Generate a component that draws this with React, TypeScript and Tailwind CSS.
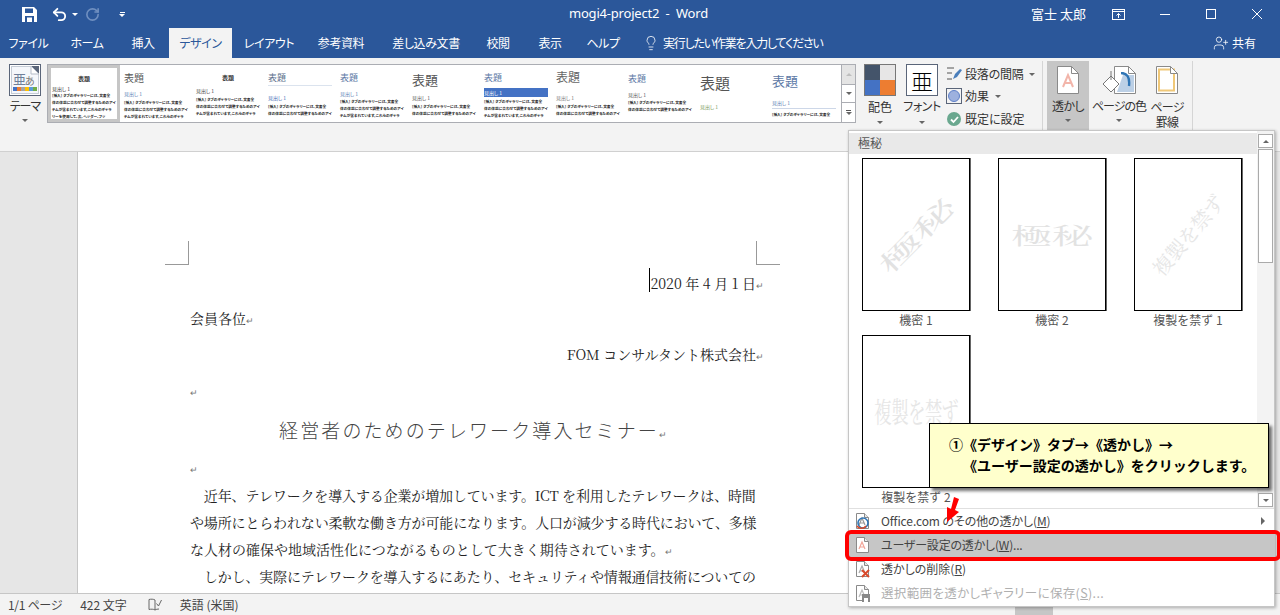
import React from 'react';
import { Lightbulb, UserPlus, Undo2, RotateCw } from 'lucide-react';

const tabs = [
  { label: 'ファイル', w: 'w-[57px]' },
  { label: 'ホーム', w: 'w-[60px]' },
  { label: '挿入', w: 'w-[52px]' },
  { label: 'デザイン', w: 'w-[63px]', active: true },
  { label: 'レイアウト', w: 'w-[74px]' },
  { label: '参考資料', w: 'w-[70px]' },
  { label: '差し込み文書', w: 'w-[100px]' },
  { label: '校閲', w: 'w-[44px]' },
  { label: '表示', w: 'w-[60px]' },
  { label: 'ヘルプ', w: 'w-[46px]' },
];

const bodyLines = [
  '[挿入] タブのギャラリーには、文書全',
  '体の体裁に合わせて調整するためのアイ',
  'テムが含まれています。これらのギャラ',
  'リーを使用して、表、ヘッダー、フッ',
];

type Style = {
  titleCls: string;
  headCls: string;
  bodyCls: string;
  lines: number;
  ruleCls?: string;
  centered?: boolean;
  selected?: boolean;
};

const styles: Style[] = [
  { titleCls: 'text-[6px] text-[#333] font-bold mt-[8px]', headCls: 'text-[#333] mt-[4px]', bodyCls: 'mt-0', lines: 4, centered: true, selected: true },
  { titleCls: 'text-[10px] text-[#555] mt-[8px]', headCls: 'text-[#5b7fb5] mt-[8px]', bodyCls: 'mt-[2px]', lines: 3 },
  { titleCls: 'text-[6px] text-[#333] font-bold mt-[10px]', headCls: 'text-[#444] mt-[7px]', bodyCls: 'mt-[2px]', lines: 3, centered: true },
  { titleCls: 'text-[9px] text-[#5c6f8c] mt-[8px]', ruleCls: 'mt-[3px]', headCls: 'text-[#3f6cb5] mt-[9px]', bodyCls: 'mt-[2px]', lines: 2 },
  { titleCls: 'text-[9px] text-[#5c78a5] mt-[8px]', headCls: 'text-[#5b7fb5] mt-[9px]', bodyCls: 'mt-[1px]', lines: 3 },
  { titleCls: 'text-[13px] text-[#555] mt-[8px]', headCls: 'text-[#555] mt-[9px]', bodyCls: 'mt-[2px]', lines: 2 },
  { titleCls: 'text-[9px] text-[#5c78a5] mt-[8px]', headCls: 'text-white bg-[#4472c4] h-[9px] mt-[6px] leading-[9px]', bodyCls: 'mt-[1px]', lines: 3 },
  { titleCls: 'text-[12px] text-[#666] mt-[6px]', headCls: 'text-[#777] mt-[12px]', bodyCls: 'mt-[2px]', lines: 2 },
  { titleCls: 'text-[9px] text-[#5c78a5] mt-[9px]', headCls: 'text-[#555] mt-[9px]', bodyCls: 'mt-[1px]', lines: 2 },
  { titleCls: 'text-[15px] text-[#555] mt-[10px]', headCls: 'text-[#7a9a5c] mt-[14px]', bodyCls: 'mt-[1px]', lines: 0 },
  { titleCls: 'text-[13px] text-[#5c78a5] mt-[9px]', headCls: 'text-[#5b7fb5] mt-[13px]', ruleCls: 'mt-[2px] order-last', bodyCls: 'mt-[2px]', lines: 1 },
];

function StyleThumb({ s }: { s: Style }) {
  return (
    <div className={`w-[72px] shrink-0 overflow-hidden leading-none ${s.selected ? 'h-[57px] border-[3px] border-[#c6c6c6] px-[1px]' : 'h-[57px] px-[4px]'}`}>
      <div className={`${s.titleCls} ${s.centered ? 'text-center' : ''}`}>表題</div>
      {s.ruleCls && !s.ruleCls.includes('order-last') && <div className={`h-px bg-[#dbe3ee] ${s.ruleCls}`} />}
      <div className={`text-[5px] h-[6px] leading-[6px] ${s.headCls}`}>見出し 1</div>
      {s.ruleCls && s.ruleCls.includes('order-last') && <div className={`h-px bg-[#cdd7e8] ${s.ruleCls}`} />}
      <div className={`text-[3.7px] leading-[7px] text-[#222] font-bold whitespace-nowrap ${s.bodyCls}`}>
        {bodyLines.slice(0, s.lines).map((l) => <div key={l}>{l}</div>)}
      </div>
    </div>
  );
}

function Caret({ className = '' }: { className?: string }) {
  return <div className={`w-0 h-0 border-x-[3px] border-x-transparent border-t-[3px] border-t-[#666] ${className}`} />;
}

function Ret() {
  return <span className="text-[9px] leading-none text-[#777] font-['Noto_Sans_CJK_JP',sans-serif] tracking-normal">↵</span>;
}

function ThemeIcon() {
  return (
    <svg width="32" height="32" viewBox="0 0 32 32">
      <rect x="0.5" y="0.5" width="31" height="31" fill="#fff" stroke="#5a6579" />
      <rect x="2.5" y="2.5" width="27" height="27" fill="#f5f7fb" stroke="#c5ccd6" />
      <path d="M22 2h8v8z" fill="#5a6579" />
      <path d="M22 2v8h8z" fill="#fff" stroke="#b5bcc8" />
      <text x="4" y="20" fontSize="13" fill="#6f7f99">亜</text>
      <text x="16" y="21" fontSize="10" fill="#777">あ</text>
      <rect x="4" y="23" width="4" height="4" fill="#4472c4" />
      <rect x="8" y="23" width="4" height="4" fill="#ed7d31" />
      <rect x="12" y="23" width="4" height="4" fill="#a5a5a5" />
      <rect x="16" y="23" width="4" height="4" fill="#ffc000" />
      <rect x="20" y="23" width="4" height="4" fill="#5b9bd5" />
      <rect x="24" y="23" width="4" height="4" fill="#70ad47" />
    </svg>
  );
}

function SaveIcon() {
  return (
    <svg width="15" height="15" viewBox="0 0 15 15">
      <path d="M0 0h12l3 3v12H0z" fill="#fff" />
      <rect x="3" y="1.5" width="8" height="4.5" fill="#2b579a" />
      <rect x="3" y="9" width="9" height="6" fill="#2b579a" />
      <rect x="5" y="10.5" width="5" height="4.5" fill="#fff" />
    </svg>
  );
}

function WatermarkCard({ text, sub, tone }: { text: string; sub: string; tone: string }) {
  return (
    <div className="w-[136px] flex flex-col items-center shrink-0">
      <div className="w-[108px] h-[153px] border border-black bg-white flex items-center justify-center overflow-hidden shadow-[1px_0_0_#666]">
        <div className={`whitespace-nowrap font-['Noto_Serif_CJK_JP','Liberation_Serif',serif] ${tone}`}>{text}</div>
      </div>
      <div className="text-[12px] text-[#555] leading-[18px] [font-feature-settings:normal]">{sub}</div>
    </div>
  );
}

function MenuRow({ icon, children, cls = '', arrow }: { icon: React.ReactNode; children: React.ReactNode; cls?: string; arrow?: boolean }) {
  return (
    <div className={`h-[24px] flex items-center leading-none ${cls}`}>
      <div className="w-[32px] pl-[4px] flex shrink-0">{icon}</div>
      <div className="flex-1 whitespace-nowrap">{children}</div>
      {arrow && <div className="mr-[9px] w-0 h-0 border-y-[4px] border-y-transparent border-l-[4px] border-l-[#666]" />}
    </div>
  );
}

function MenuDoc({ color = '#f2a69a', children }: { color?: string; children?: React.ReactNode }) {
  return (
    <svg width="18" height="18" viewBox="0 0 18 18">
      <path d="M3.5 1.5h8l4 4v11h-12z" fill="#fff" stroke="#8a8a8a" />
      <path d="M11.5 1.5v4h4" fill="#e8e8e8" stroke="#8a8a8a" />
      <path d="M6 13l3-7 3 7M7 11h4" fill="none" stroke={color} strokeWidth="1.2" />
      {children}
    </svg>
  );
}

function PageDoc({ children }: { children?: React.ReactNode }) {
  return (
    <svg width="22" height="28" viewBox="0 0 22 28">
      <path d="M0.5 0.500h14l7 7v20h-21z" fill="#fff" stroke="#8a8a8a" />
      {children}
      <path d="M14.500 0.500v7h7z" fill="#fff" stroke="#8a8a8a" />
    </svg>
  );
}

export default function App() {
  return (
    <div className="w-[1280px] h-[615px] overflow-hidden relative flex flex-col bg-[#e6e6e6] text-[#333] font-['Noto_Sans_CJK_JP','Noto_Sans',sans-serif] [font-feature-settings:'palt']">
      {/* title bar */}
      <div className="h-[28px] bg-[#2b579a] text-white flex items-center shrink-0">
        <div className="flex items-center pl-[22px] w-[569px] shrink-0">
          <SaveIcon />
          <Undo2 size={17} strokeWidth={2.6} className="ml-[14px]" />
          <div className="ml-[4px] w-0 h-0 border-x-[3px] border-x-transparent border-t-[3px] border-t-white" />
          <RotateCw size={15} strokeWidth={2.6} className="text-[#6f8fc0] ml-[7px]" />
          <div className="flex flex-col items-center gap-[1px] ml-[19px]">
            <div className="w-[5px] h-px bg-white" />
            <div className="w-0 h-0 border-x-[3px] border-x-transparent border-t-[3px] border-t-white" />
          </div>
        </div>
        <div className="flex-1 text-[13px] tracking-[-0.2px] font-['Noto_Sans',sans-serif] whitespace-pre">{'mogi4-project2  -  Word'}</div>
        <div className="text-[13px] mr-[26px] [font-feature-settings:normal]">富士 太郎</div>
        <svg width="13" height="11" viewBox="0 0 13 11" className="mr-[35px]" fill="none" stroke="#fff">
          <rect x="0.5" y="0.5" width="12" height="10" />
          <path d="M0.5 2.5h12M6.5 9V4.5M4.5 6.5l2-2 2 2" />
        </svg>
        <div className="w-[10px] h-px bg-white mr-[36px]" />
        <div className="w-[10px] h-[10px] border border-white mr-[36px]" />
        <svg width="10" height="10" viewBox="0 0 10 10" className="mr-[18px]" stroke="#fff"><path d="M0 0l10 10M10 0L0 10" /></svg>
      </div>

      {/* tabs */}
      <div className="h-[30px] bg-[#2b579a] flex items-stretch shrink-0 text-white text-[12px]">
        {tabs.map((t) => (
          <div key={t.label} className={`${t.w} flex items-center justify-center whitespace-nowrap tracking-[-0.4px] ${t.active ? 'bg-[#f3f3f3] text-[#2b579a]' : ''}`}>{t.label}</div>
        ))}
        <div className="flex items-center ml-[17px] gap-[4px]">
          <Lightbulb size={16} strokeWidth={1.2} />
          <span className="tracking-[-1.2px]">実行したい作業を入力してください</span>
        </div>
        <div className="ml-auto flex items-center gap-[3px] mr-[24px]">
          <UserPlus size={16} strokeWidth={1.2} />
          <span>共有</span>
        </div>
      </div>

      {/* ribbon */}
      <div className="h-[94px] bg-[#f3f3f3] border-b border-[#d0d0d0] shrink-0 flex items-start">
        <div className="w-[1043px] shrink-0 flex flex-col items-stretch border-r border-[#d5d5d5] h-[72px] mt-[3px]">
          <div className="flex items-start pt-[3px]">
            <div className="w-[47px] shrink-0 flex flex-col items-center pl-[3px]">
              <ThemeIcon />
              <div className="text-[12px] leading-[16px] mt-[2px] tracking-[-1px]">テーマ</div>
              <Caret className="mt-[5px]" />
            </div>
            <div className="w-[795px] h-[59px] border border-[#abadb3] bg-white flex overflow-hidden shrink-0">
              {styles.map((s, i) => <StyleThumb key={i} s={s} />)}
            </div>
            <div className="w-[14px] h-[59px] border border-l-0 border-[#abadb3] flex flex-col bg-white shrink-0">
              <div className="h-[19px] bg-[#e4e4e4] flex items-center justify-center"><Caret className="rotate-180 opacity-30" /></div>
              <div className="h-[19px] border-y border-[#abadb3] flex items-center justify-center"><Caret /></div>
              <div className="flex-1 flex flex-col items-center justify-center gap-px"><div className="w-[5px] h-px bg-[#555]" /><Caret /></div>
            </div>
            <div className="w-[50px] flex flex-col items-center shrink-0 -ml-[1px]">
              <div className="w-[32px] h-[32px] grid grid-cols-2 border border-[#777]">
                <div className="bg-[#44546a]" /><div className="bg-[#e7e6e6]" />
                <div className="bg-[#4472c4]" /><div className="bg-[#ed7d31]" />
              </div>
              <div className="text-[12px] leading-[16px] mt-[3px]">配色</div>
              <Caret className="mt-[6px]" />
            </div>
            <div className="w-[40px] flex flex-col items-center shrink-0 -ml-[3px]">
              <div className="w-[32px] h-[32px] border border-[#5a6579] bg-white flex items-center justify-center text-[22px] leading-none text-black font-light">亜</div>
              <div className="text-[12px] leading-[16px] mt-[2px] whitespace-nowrap tracking-[-0.4px]">フォント</div>
              <Caret className="mt-[7px]" />
            </div>
            <div className="flex flex-col text-[12px] leading-none pl-[4px] shrink-0 whitespace-nowrap">
              <div className="h-[20px] flex items-center gap-[2px]">
                <svg width="17" height="16" viewBox="0 0 17 16"><path d="M1 2h7M1 7h5M1 13h5" stroke="#555" /><path d="M14 3l2 1-5 7-4 2 2-5z" fill="#4a7ebb" /></svg>
                <span className="tracking-[-0.2px]">段落の間隔</span><Caret className="ml-[3px]" />
              </div>
              <div className="h-[22px] flex items-center gap-[3px] mt-[1px]">
                <div className="w-[16px] h-[16px] border border-[#5a6579] flex items-center justify-center"><div className="w-[12px] h-[12px] rounded-full bg-[#9db1de] border border-[#5e80c8]" /></div>
                効果<Caret className="ml-[3px]" />
              </div>
              <div className="h-[24px] flex items-center gap-[4px]">
                <div className="w-[14px] h-[14px] rounded-full bg-[#6aa88f] flex items-center justify-center ml-[1px]">
                  <svg width="9" height="9" viewBox="0 0 9 9"><path d="M1 4.5l2.5 2.5L8 2" fill="none" stroke="#fff" strokeWidth="1.8" /></svg>
                </div>
                既定に設定
              </div>
            </div>
          </div>
        </div>
        <div className="w-[150px] h-[72px] mt-[3px] flex items-stretch border-r border-[#d5d5d5] shrink-0 text-[12px] leading-[14px]">
          <div className="ml-[4px] w-[42px] bg-[#c6c6c6] flex flex-col items-center pt-[5px]">
            <PageDoc><path d="M6 21l5-12 5 12M7.500 17h7" fill="none" stroke="#f2b5aa" strokeWidth="2" /></PageDoc>
            <div className="mt-[5px] tracking-[-0.6px]">透かし</div>
            <Caret className="mt-[6px]" />
          </div>
          <div className="w-[60px] flex flex-col items-center pt-[5px]">
            <div className="relative ml-[12px]">
              <PageDoc><path d="M9 9h11v17H3z" fill="#bcd0e6" /></PageDoc>
              <svg className="absolute -left-[12px] top-[5px]" width="20" height="22" viewBox="0 0 20 22">
                <path d="M1 13l8-8 8 8-8 8z" fill="#fff" stroke="#777" />
                <path d="M9 0v9" stroke="#777" />
              </svg>
              <svg className="absolute left-[6px] top-[6px]" width="12" height="16" viewBox="0 0 12 16"><path d="M1 1c6 0 9 4 8 13" fill="none" stroke="#2f75b5" strokeWidth="2.4" /></svg>
            </div>
            <div className="mt-[5px] whitespace-nowrap tracking-[-1px]">ページの色</div>
            <Caret className="mt-[6px]" />
          </div>
          <div className="w-[36px] flex flex-col items-center pt-[5px]">
            <PageDoc><rect x="3" y="3.500" width="15" height="21" fill="none" stroke="#f0c878" strokeWidth="2" /></PageDoc>
            <div className="mt-[5px] text-center tracking-[-0.8px] leading-[15px]">ページ<br />罫線</div>
          </div>
        </div>
      </div>

      {/* document page */}
      <div className="flex-1 min-h-0 overflow-hidden pl-[77px] bg-[#e6e6e6]">
        <div className="w-[797px] h-full bg-white border-l border-[#c6c6c6] text-[14px] text-[#222] font-['Noto_Serif_CJK_JP','Liberation_Serif',serif] [font-feature-settings:normal] relative pl-[112px] pr-[118px] pt-[113px]">
          <div className="absolute left-[87px] top-[89px] w-[24px] h-[24px] border-r border-b border-[#999]" />
          <div className="absolute left-[678px] top-[89px] w-[24px] h-[24px] border-l border-b border-[#999]" />
          <div className="h-[36px] leading-[36px] text-right whitespace-nowrap -mr-[8px]">
            <span className="relative">
              <span className="absolute -left-px top-[-5px] w-px h-[24px] bg-black" />
              2020 年 4 月 1 日
            </span>
            <Ret />
          </div>
          <div className="h-[35px] leading-[35px]">会員各位<Ret /></div>
          <div className="h-[36px] leading-[36px] text-right whitespace-nowrap -mr-[8px]">FOM コンサルタント株式会社<Ret /></div>
          <div className="h-[36px] leading-[36px]"><Ret /></div>
          <div className="h-[44px] text-[19px] leading-[44px] text-center tracking-[2.1px] text-[#444] font-['Noto_Sans_CJK_JP',sans-serif] font-light">経営者のためのテレワーク導入セミナー<Ret /></div>
          <div className="h-[30px] leading-[30px]"><Ret /></div>
          <div className="h-[27px] whitespace-nowrap leading-[27px] tracking-[-0.15px]">　近年、テレワークを導入する企業が増加しています。ICT を利用したテレワークは、時間</div>
          <div className="h-[27px] whitespace-nowrap leading-[27px] tracking-[-0.15px]">や場所にとらわれない柔軟な働き方が可能になります。人口が減少する時代において、多様</div>
          <div className="h-[27px] whitespace-nowrap leading-[27px]">な人材の確保や地域活性化につながるものとして大きく期待されています。<Ret /></div>
          <div className="h-[27px] whitespace-nowrap leading-[27px] tracking-[-0.15px]">　しかし、実際にテレワークを導入するにあたり、セキュリティや情報通信技術についての</div>
        </div>
      </div>

      {/* status bar */}
      <div className="h-[22px] bg-[#f3f3f3] border-t border-[#c6c6c6] shrink-0 flex items-center text-[12px] text-[#444] pl-[8px] relative">
        <span className="tracking-[-0.3px]">1/1 ページ</span>
        <span className="ml-[18px]">422 文字</span>
        <svg className="ml-[21px]" width="14" height="13" viewBox="0 0 14 13" fill="none" stroke="#666">
          <path d="M7 2C5.5 1 3 1 1 1.5v10c2-.5 4.500-.5 6 .5M7 2v10c1-.7 2.500-1 4-1" />
          <path d="M8.500 5.500l2 2.500 3-6" />
        </svg>
        <span className="ml-[18px]">英語 (米国)</span>
        <div className="absolute left-[1015px] top-0 w-[38px] h-full bg-[#c6c6c6]" />
      </div>

      {/* watermark gallery dropdown */}
      <div className="absolute left-[848px] top-[130px] w-[427px] h-[477px] bg-white border border-[#c6c6c6] shadow-[1px_1px_3px_rgba(0,0,0,0.3)] flex flex-col">
        <div className="flex h-[377px] shrink-0">
          <div className="flex-1 min-w-0">
            <div className="h-[21px] mt-[2px] bg-[#e9e9e9] text-[12px] leading-[20px] pl-[9px] text-[#555] [font-feature-settings:normal]">極秘</div>
            <div className="grid grid-cols-[repeat(3,136px)] -ml-[1px] pt-[4px] gap-y-[6px]">
              <WatermarkCard text="極秘" sub="機密 1" tone="text-[48px] text-[#e2e2e2] [transform:rotate(-45deg)_scaleY(.5)]" />
              <WatermarkCard text="極秘" sub="機密 2" tone="text-[41px] text-[#e2e2e2] [transform:scaleY(.55)]" />
              <WatermarkCard text="複製を禁ず" sub="複製を禁ず 1" tone="text-[20px] text-[#e6e6e6] -rotate-[50deg]" />
              <WatermarkCard text="複製を禁ず" sub="複製を禁ず 2" tone="text-[21px] text-[#e6e6e6] [transform:scale(.82,1.35)]" />
            </div>
          </div>
          <div className="w-[17px] bg-[#f3f3f3] flex flex-col items-center pt-[3px] shrink-0">
            <div className="w-[15px] h-[14px] border border-[#aaa] bg-white flex items-center justify-center"><Caret className="rotate-180" /></div>
            <div className="w-[15px] h-[114px] border border-[#aaa] bg-white mt-[1px]" />
            <div className="flex-1" />
            <div className="w-[15px] h-[14px] border border-[#aaa] bg-white flex items-center justify-center mb-[1px]"><Caret /></div>
          </div>
        </div>
        <div className="border-t border-[#e0e0e0] text-[#444] flex flex-col">
          <MenuRow cls="text-[12px] tracking-[-0.1px]" arrow icon={
            <MenuDoc color="#999">
              <circle cx="10" cy="11" r="5" fill="none" stroke="#2f75b5" strokeWidth="1.6" />
              <path d="M4 14c2 3 7 3 9 0" fill="none" stroke="#d94a2b" strokeWidth="1.6" />
            </MenuDoc>
          }>Office.com のその他の透かし(<u>M</u>)</MenuRow>
          <MenuRow cls="bg-[#c6c6c6] text-[12px] tracking-[-0.2px]" icon={<MenuDoc />}>ユーザー設定の透かし(<u>W</u>)...</MenuRow>
          <MenuRow cls="text-[12px]" icon={<MenuDoc color="#aaa"><path d="M9 10l7 7M16 10l-7 7" stroke="#d94a2b" strokeWidth="2" /></MenuDoc>}>透かしの削除(<u>R</u>)</MenuRow>
          <MenuRow cls="text-[#b0b0b0] text-[12.5px] tracking-[0.35px]" icon={<MenuDoc color="#bbb"><rect x="9" y="10" width="8" height="8" fill="#888" /><rect x="11" y="14" width="4" height="4" fill="#fff" /></MenuDoc>}>選択範囲を透かしギャラリーに保存(<u>S</u>)...</MenuRow>
        </div>
      </div>

      {/* instruction callout */}
      <div className="absolute left-[929px] top-[423px] w-[340px] h-[65px] bg-[#ffffcc] border border-black shadow-[3px_3px_3px_rgba(0,0,0,0.55)] text-[14px] font-bold text-black leading-[21px] pt-[10px] pl-[19px] whitespace-nowrap [font-feature-settings:normal]">
        <div>①《デザイン》タブ→《透かし》→</div>
        <div className="pl-[14px]">《ユーザー設定の透かし》をクリックします。</div>
      </div>

      {/* red annotations */}
      <div className="absolute left-[845px] top-[530px] w-[436px] h-[31px] border-[4px] border-[#ff0000] rounded-[6px]" />
      <svg className="absolute left-[945px] top-[497px]" width="14" height="26" viewBox="0 0 14 26">
        <path d="M9 0l5 2-4 11 4 2L2 25 2 10l4 2z" fill="#ff0000" />
      </svg>
    </div>
  );
}
